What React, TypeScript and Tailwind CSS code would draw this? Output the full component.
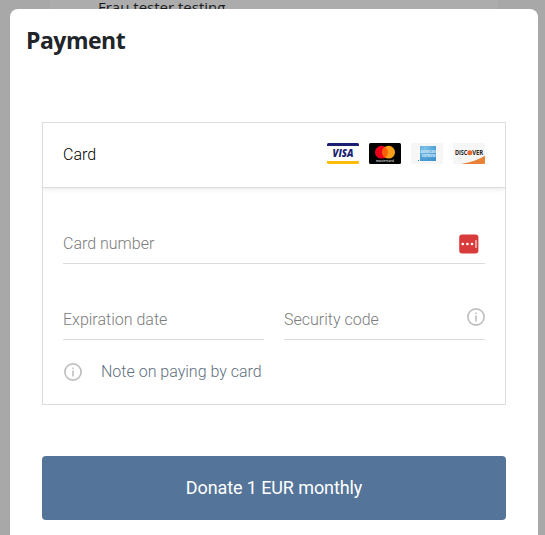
const InfoIcon = () => (
  <svg width="18" height="18" viewBox="0 0 18 18" fill="none" className="block">
    <circle cx="9" cy="9" r="8.1" stroke="#bfbfbf" strokeWidth="1.7" />
    <path d="M9 7.5V13.5M9 4.6V6.1" stroke="#bfbfbf" strokeWidth="1.6" />
  </svg>
);

const Visa = () => (
  <svg width="32" height="21" viewBox="0 0 32 21" className="block">
    <path d="M0 3V1.5Q0 0 1.5 0H30.5Q32 0 32 1.5V3Z" fill="#1b1f71" />
    <path d="M0 18H32V19.5Q32 21 30.5 21H1.5Q0 21 0 19.5Z" fill="#fdbb0a" />
    <text
      x="5.6"
      y="14"
      fontSize="9.6"
      fontWeight="800"
      fontStyle="italic"
      fontFamily="Open Sans, sans-serif"
      fill="#1b1f71"
      textLength="21"
      lengthAdjust="spacingAndGlyphs"
    >
      VISA
    </text>
  </svg>
);

const Mastercard = () => (
  <svg width="32" height="21" viewBox="0 0 32 21" className="block">
    <rect width="32" height="21" rx="1.5" fill="#000" />
    <circle cx="12.4" cy="9.2" r="6.4" fill="#eb001b" />
    <circle cx="19.6" cy="9.2" r="6.4" fill="#f79e1b" />
    <path d="M16 3.9A6.4 6.4 0 0 1 16 14.5A6.4 6.4 0 0 1 16 3.9Z" fill="#ff5f00" />
    <text
      x="7"
      y="18.8"
      fontSize="3.2"
      fontWeight="600"
      fontFamily="Open Sans, sans-serif"
      fill="#ddd"
      textLength="18"
      lengthAdjust="spacingAndGlyphs"
    >
      mastercard
    </text>
  </svg>
);

const Amex = () => (
  <svg width="32" height="21" viewBox="0 0 32 21" className="block">
    <defs>
      <radialGradient id="amex" cx="0.3" cy="0.15" r="1">
        <stop offset="0" stopColor="#7cc0e6" />
        <stop offset="1" stopColor="#3b92ce" />
      </radialGradient>
    </defs>
    <rect width="32" height="21" rx="1.5" fill="#f6f6f6" />
    <rect x="9" y="3" width="16" height="15" fill="url(#amex)" />
    <rect x="7" y="17" width="1" height="1" fill="#2386c0" />
    <g
      fontFamily="Open Sans, sans-serif"
      fontWeight="800"
      fill="#cfe6f5"
      fontSize="3.4"
    >
      <text x="9.6" y="10.2" textLength="14.8" lengthAdjust="spacingAndGlyphs">
        AMERICAN
      </text>
      <text x="11" y="14.4" textLength="13.6" lengthAdjust="spacingAndGlyphs">
        EXPRESS
      </text>
    </g>
  </svg>
);

const Discover = () => (
  <svg width="32" height="21" viewBox="0 0 32 21" className="block">
    <rect width="32" height="21" rx="1.5" fill="#f6f6f6" />
    <path d="M8 21Q23 18.5 32 12.8V19.5Q32 21 30.5 21Z" fill="#e98136" />
    <circle cx="16.8" cy="9.7" r="2.5" fill="#e8692c" />
    <g
      fontFamily="Open Sans, sans-serif"
      fontWeight="700"
      fill="#2b2523"
      fontSize="7"
    >
      <text x="1.9" y="12.3" textLength="12.5" lengthAdjust="spacingAndGlyphs">
        DISC
      </text>
      <text x="19.2" y="12.3" textLength="11" lengthAdjust="spacingAndGlyphs">
        VER
      </text>
    </g>
  </svg>
);

const PasswordManagerIcon = () => (
  <svg width="20" height="20" viewBox="0 0 20 20" className="block">
    <rect x="0.2" y="0.4" width="19.2" height="19.2" rx="3" fill="#d93b3a" />
    <circle cx="3.8" cy="10" r="1.35" fill="#fff" />
    <circle cx="8.4" cy="10" r="1.35" fill="#fff" />
    <circle cx="13" cy="10" r="1.35" fill="#fff" />
    <rect x="16" y="6" width="2" height="8" fill="#ee9d9c" />
  </svg>
);

const App = () => {
  return (
    <div className="relative h-[535px] w-[545px] overflow-hidden bg-[#a8a8a8] font-[Roboto,sans-serif]">
      <div className="ml-[50px] h-[535px] w-[448px] bg-[#acacac] pl-12 font-['Open_Sans',sans-serif] text-[15px] leading-[14px] text-[#181b1e]">
        Frau tester testing
      </div>
      <div className="absolute top-[9px] left-[10px] h-[540px] w-[528px] rounded-lg bg-white">
        <h1 className="pt-[15px] pl-4 font-['Open_Sans',sans-serif] text-[23px] leading-8 font-bold tracking-[-0.5px] text-[#212529]">
          Payment
        </h1>
        <div className="mx-8 mt-[66px] h-[283px] overflow-hidden border border-[#dcdcdc] text-base font-light text-[#7c7c7c]">
          <div className="flex h-[65px] items-center justify-between border-b border-[#dcdcdc] px-5 text-black shadow-[0_1px_5px_rgba(0,0,0,0.1)]">
            <span>Card</span>
            <div className="mb-[3px] flex gap-2.5">
              <Visa />
              <Mastercard />
              <Amex />
              <Discover />
            </div>
          </div>
          <div className="px-5 pt-9">
            <div className="flex h-10 items-center justify-between border-b border-[#dcdcdc]">
              <span>Card number</span>
              <div className="mr-1.5">
                <PasswordManagerIcon />
              </div>
            </div>
            <div className="mt-9 flex gap-5">
              <div className="flex h-10 flex-1 items-center border-b border-[#dcdcdc]">
                Expiration date
              </div>
              <div className="flex h-10 flex-1 items-center justify-between border-b border-[#dcdcdc]">
                <span>Security code</span>
                <div className="mb-[5px]">
                  <InfoIcon />
                </div>
              </div>
            </div>
            <div className="mt-5 flex items-center gap-[19px] pl-px">
              <InfoIcon />
              <a className="text-[#5f6f80]">Note on paying by card</a>
            </div>
          </div>
        </div>
        <div className="mx-8 mt-[51px]">
          <button className="block h-16 w-full rounded bg-[#547599] text-lg tracking-[-0.1px] text-white">
            Donate 1 EUR monthly
          </button>
        </div>
      </div>
    </div>
  );
};

export default App;
